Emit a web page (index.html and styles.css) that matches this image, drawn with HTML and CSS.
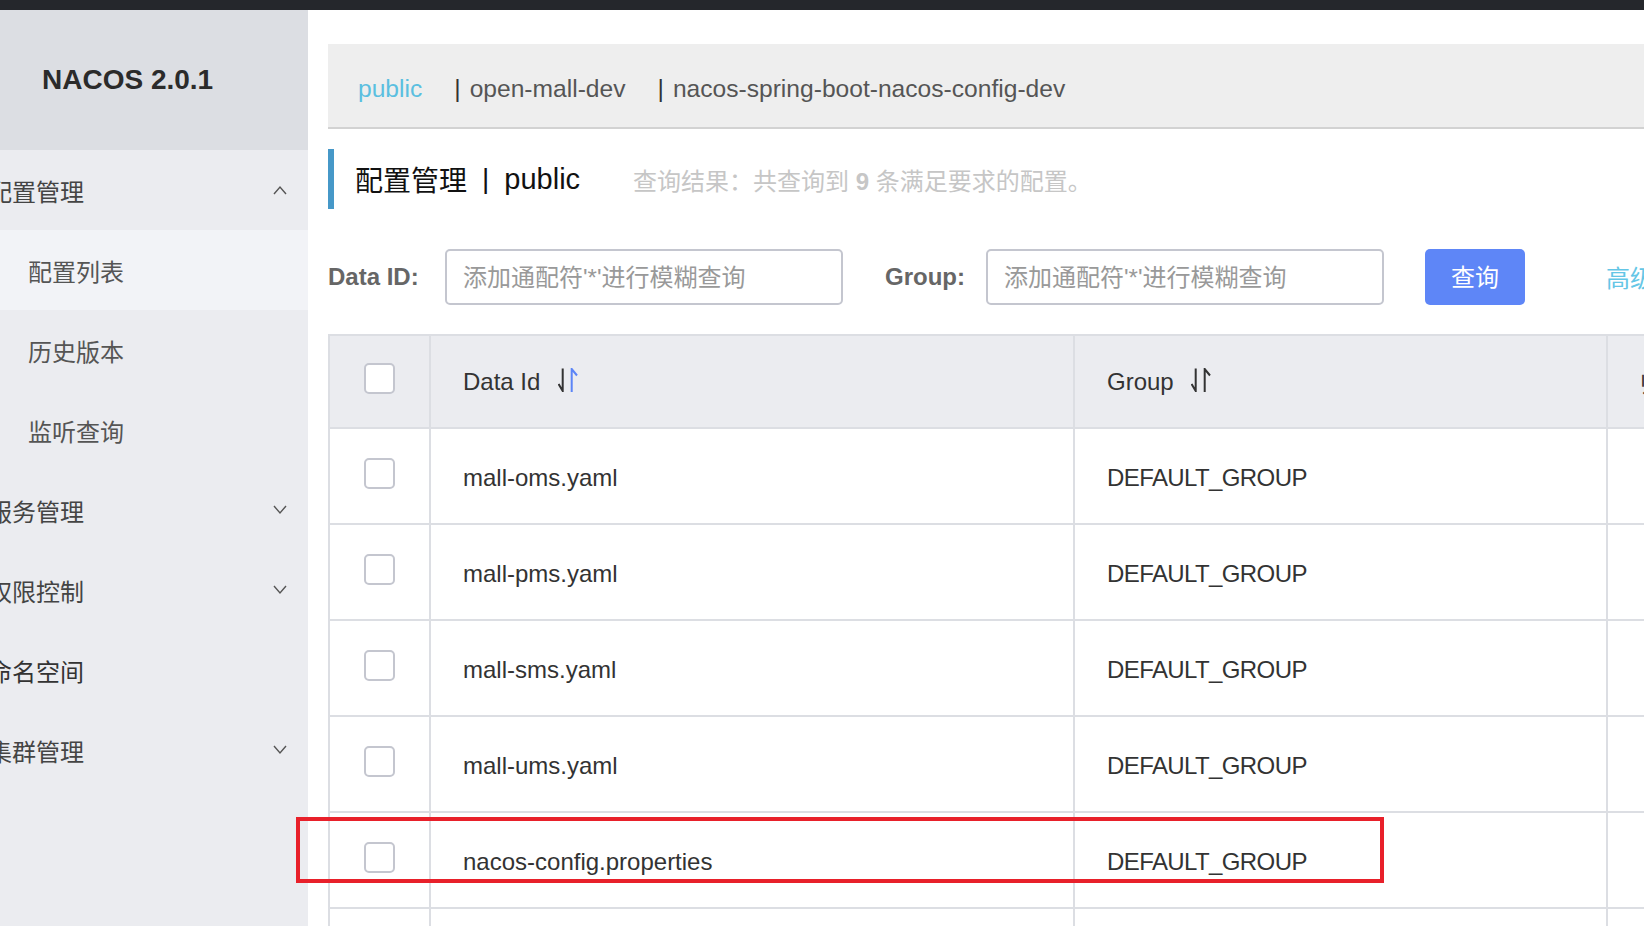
FILE: index.html
```html
<!DOCTYPE html>
<html lang="zh-CN">
<head>
<meta charset="utf-8">
<title>NACOS 2.0.1</title>
<link rel="stylesheet" href="styles.css">
</head>
<body>
<div class="topbar"></div>
<div class="layout">
  <aside class="sidebar">
    <div class="logo">NACOS 2.0.1</div>
    <div class="menu-head">
      <span class="menu-label">配置管理</span>
      <svg class="chev" width="14" height="10" viewBox="0 0 14 10"><polyline points="1,9 7,2 13,9" fill="none" stroke="#555" stroke-width="1.4"/></svg>
    </div>
    <div class="menu-sub active">配置列表</div>
    <div class="menu-sub">历史版本</div>
    <div class="menu-sub">监听查询</div>
    <div class="menu-head">
      <span class="menu-label">服务管理</span>
      <svg class="chev" width="14" height="10" viewBox="0 0 14 10"><polyline points="1,1 7,8 13,1" fill="none" stroke="#555" stroke-width="1.4"/></svg>
    </div>
    <div class="menu-head">
      <span class="menu-label">权限控制</span>
      <svg class="chev" width="14" height="10" viewBox="0 0 14 10"><polyline points="1,1 7,8 13,1" fill="none" stroke="#555" stroke-width="1.4"/></svg>
    </div>
    <div class="menu-head">
      <span class="menu-label dark">命名空间</span>
    </div>
    <div class="menu-head">
      <span class="menu-label">集群管理</span>
      <svg class="chev" width="14" height="10" viewBox="0 0 14 10"><polyline points="1,1 7,8 13,1" fill="none" stroke="#555" stroke-width="1.4"/></svg>
    </div>
  </aside>

  <main class="main">
    <div class="breadcrumb">
      <span class="crumb active">public</span>
      <span class="crumb">open-mall-dev</span>
      <span class="crumb">nacos-spring-boot-nacos-config-dev</span>
    </div>

    <div class="title">
      <span class="title-main">配置管理</span>
      <span class="title-sep">|</span>
      <span class="title-ns">public</span>
      <span class="title-desc">查询结果：共查询到 <b>9</b> 条满足要求的配置。</span>
    </div>

    <div class="filters">
      <label class="f-label f-label-id">Data ID:</label>
      <div class="f-input">添加通配符'*'进行模糊查询</div>
      <label class="f-label f-label-group">Group:</label>
      <div class="f-input">添加通配符'*'进行模糊查询</div>
      <button class="btn-query">查询</button>
      <a class="adv-link">高级查询</a>
    </div>

    <div class="table-wrap">
      <div class="table">
        <div class="row head">
          <div class="cell cb"><span class="checkbox"></span></div>
          <div class="cell">Data Id
            <svg class="sort" width="20" height="24" viewBox="0 0 20 24"><path d="M4.7 0.5 V23 L0.6 16" fill="none" stroke="#333" stroke-width="2"/><path d="M13.7 24 V1 L19 7.5" fill="none" stroke="#5c85f7" stroke-width="2"/></svg>
          </div>
          <div class="cell">Group
            <svg class="sort" width="20" height="24" viewBox="0 0 20 24"><path d="M4.7 0.5 V23 L0.6 16" fill="none" stroke="#333" stroke-width="2"/><path d="M13.7 24 V1 L19 7.5" fill="none" stroke="#333" stroke-width="2"/></svg>
          </div>
          <div class="cell">归属应用</div>
        </div>
        <div class="row">
          <div class="cell cb"><span class="checkbox"></span></div>
          <div class="cell">mall-oms.yaml</div>
          <div class="cell caps">DEFAULT_GROUP</div>
          <div class="cell"></div>
        </div>
        <div class="row">
          <div class="cell cb"><span class="checkbox"></span></div>
          <div class="cell">mall-pms.yaml</div>
          <div class="cell caps">DEFAULT_GROUP</div>
          <div class="cell"></div>
        </div>
        <div class="row">
          <div class="cell cb"><span class="checkbox"></span></div>
          <div class="cell">mall-sms.yaml</div>
          <div class="cell caps">DEFAULT_GROUP</div>
          <div class="cell"></div>
        </div>
        <div class="row">
          <div class="cell cb"><span class="checkbox"></span></div>
          <div class="cell">mall-ums.yaml</div>
          <div class="cell caps">DEFAULT_GROUP</div>
          <div class="cell"></div>
        </div>
        <div class="row highlight">
          <div class="cell cb"><span class="checkbox"></span></div>
          <div class="cell">nacos-config.properties</div>
          <div class="cell caps">DEFAULT_GROUP</div>
          <div class="cell"></div>
          <div class="mark"></div>
        </div>
        <div class="row">
          <div class="cell cb"><span class="checkbox"></span></div>
          <div class="cell"></div>
          <div class="cell"></div>
          <div class="cell"></div>
        </div>
      </div>
    </div>
  </main>
</div>
</body>
</html>
```

FILE: styles.css
```css
* { box-sizing: border-box; }

html, body {
  margin: 0;
  padding: 0;
  width: 1644px;
  height: 926px;
  overflow: hidden;
  background: #fff;
  font-family: "Liberation Sans", "Noto Sans CJK SC", sans-serif;
  color: #333;
}

.topbar {
  height: 10px;
  background: #25272c;
}

.layout {
  display: flex;
  height: 916px;
  overflow: hidden;
}

/* Sidebar */
.sidebar {
  width: 308px;
  flex-shrink: 0;
  background: #ebecf0;
  overflow: hidden;
}

.logo {
  height: 140px;
  background: #dcdee3;
  display: flex;
  align-items: center;
  padding-left: 42px;
  font-size: 28px;
  font-weight: bold;
  color: #2b2b2b;
}

.menu-head {
  height: 80px;
  display: flex;
  align-items: center;
  justify-content: space-between;
  padding-right: 21px;
  font-size: 24px;
  color: #444;
}

.menu-label {
  margin-left: -12px;
  white-space: nowrap;
}

.menu-label.dark { color: #333; }

.chev { display: block; }

.menu-sub {
  height: 80px;
  display: flex;
  align-items: center;
  padding-left: 28px;
  font-size: 24px;
  color: #555;
}

.menu-sub.active {
  background: #f2f3f7;
}

/* Main */
.main {
  width: 1336px;
  flex-shrink: 0;
  padding: 34px 0 0 20px;
}

.breadcrumb {
  height: 85px;
  width: 1316px;
  background: #eeeeee;
  border-bottom: 2px solid #d2d2d2;
  display: flex;
  align-items: center;
  padding: 6px 0 0 30px;
  font-size: 24.6px;
  color: #555;
  white-space: nowrap;
  overflow: hidden;
}

.crumb.active { color: #5bbfe0; }

.crumb + .crumb { margin-left: 32px; }

.crumb + .crumb::before {
  content: "|";
  margin-right: 9px;
  color: #333;
}

.title {
  margin-top: 20px;
  height: 60px;
  border-left: 6px solid #4698c8;
  padding-left: 21px;
  display: flex;
  align-items: center;
  white-space: nowrap;
}

.title-main {
  font-size: 28px;
  color: #111;
}

.title-sep {
  font-size: 28px;
  color: #111;
  margin: 0 15px;
}

.title-ns {
  font-size: 29px;
  color: #111;
}

.title-desc {
  margin-left: 53px;
  font-size: 24px;
  color: #c6c6c6;
}

.title-desc b { font-weight: bold; }

.filters {
  margin-top: 40px;
  width: 1316px;
  height: 56px;
  display: flex;
  align-items: center;
  white-space: nowrap;
  overflow: hidden;
}

.filters > * { flex-shrink: 0; }

.f-label {
  font-size: 24px;
  font-weight: bold;
  color: #666;
}

.f-label-id { width: 117px; }

.f-label-group {
  width: 101px;
  margin-left: 42px;
}

.f-input {
  width: 398px;
  height: 56px;
  border: 2px solid #c4c6cf;
  border-radius: 5px;
  display: flex;
  align-items: center;
  padding: 0 0 4px 16px;
  font-size: 24px;
  color: #999;
}

.btn-query {
  margin-left: 41px;
  width: 100px;
  height: 56px;
  border: none;
  border-radius: 5px;
  background: #5e86f7;
  color: #fff;
  font-family: inherit;
  font-size: 24px;
  padding: 0 0 4px 0;
}

.adv-link {
  margin-left: 81px;
  padding-bottom: 2px;
  font-size: 24px;
  color: #64c6e6;
}

/* Table */
.table-wrap {
  margin-top: 29px;
  margin-left: -32px;
  padding-left: 32px;
  width: 1348px;
  height: 592px;
  overflow: hidden;
}

.table {
  width: 1400px;
  border-top: 2px solid #dcdee3;
  border-left: 2px solid #dcdee3;
}

.row {
  position: relative;
  display: grid;
  grid-template-columns: 99px 644px 533px 1fr;
  height: 96px;
  border-bottom: 2px solid #dcdee3;
}

.row.head {
  height: 93px;
  background: #ebecf0;
}

.cell {
  display: flex;
  align-items: center;
  padding-left: 32px;
  padding-top: 4px;
  font-size: 24px;
  color: #333;
  white-space: nowrap;
  border-left: 2px solid #dcdee3;
}

.row.head .cell { padding-top: 0; }

.cell.caps { letter-spacing: -0.6px; }

.row .cell.cb {
  border-left: none;
  padding: 0 0 6px 0;
  justify-content: center;
}

.checkbox {
  display: block;
  width: 31px;
  height: 31px;
  border: 2px solid #c4c6cf;
  border-radius: 5px;
  background: #fff;
}

.sort {
  margin-left: 18px;
  margin-top: -4px;
}

.row.head .cell:nth-child(3) .sort { margin-left: 17px; }

.mark {
  position: absolute;
  left: -34px;
  top: 4px;
  width: 1088px;
  height: 66px;
  border: 4px solid #e8202a;
  pointer-events: none;
}
```
